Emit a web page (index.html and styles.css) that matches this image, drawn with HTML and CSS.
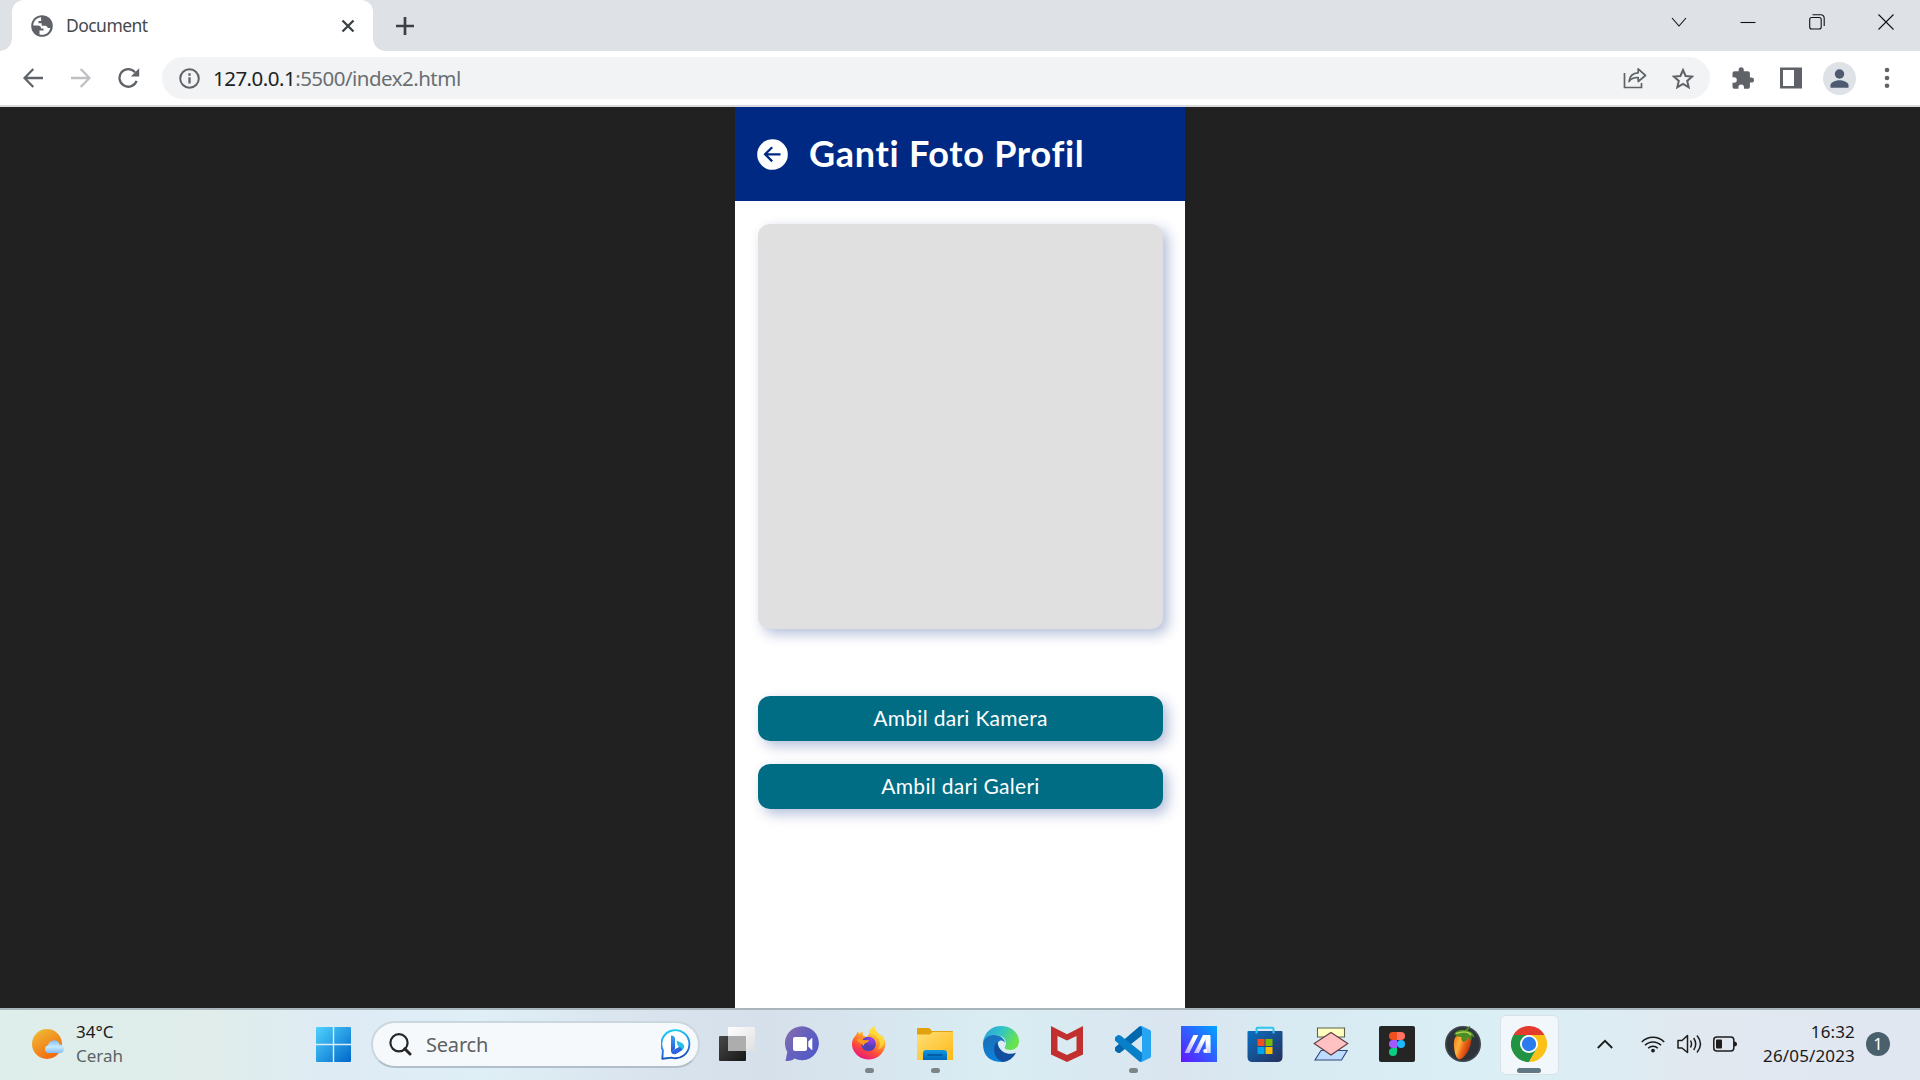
FILE: index.html
```html
<!DOCTYPE html>
<html lang="id">
<head>
<meta charset="utf-8">
<title>Document</title>
<link rel="stylesheet" href="styles.css">
</head>
<body>
<div class="screen">
  <header class="tabstrip">
    <div class="tab">
      <svg class="favicon" width="22" height="22" viewBox="0 0 22 22"><circle cx="11" cy="11" r="10.8" fill="#5f6368"/><path d="M10 2.200C5.500 2.700 2.300 6.400 2.300 10.500h4.200c2.200 0 3.500.8 3.500 3h2.500v2H8.500v3.900c5 1.500 9.800-1.300 10.800-6.400h-1.500c-1.500 0-1.800-2.300-3.300-2.300h-3.800V8.200H7.500V6.100h2.700z" fill="#fff"/></svg>
      <span class="tab-title">Document</span>
      <svg class="tab-close" width="14" height="14" viewBox="0 0 14 14"><path d="M1.500 1.500l11 11M12.500 1.500l-11 11" stroke="#3c4043" stroke-width="2.300"/></svg>
    </div>
    <svg class="new-tab" width="18" height="18" viewBox="0 0 18 18"><path d="M9 0v18M0 9h18" stroke="#3c4043" stroke-width="2.700"/></svg>
    <div class="window-controls">
      <svg width="16" height="16" viewBox="0 0 16 16"><path d="M1 4l7 8 7-8"/></svg>
      <svg width="16" height="16" viewBox="0 0 16 16"><path d="M.5 8.500h15"/></svg>
      <svg width="16" height="16" viewBox="0 0 16 16"><rect x=".7" y="3.500" width="11.500" height="11.500" rx="2"/><path d="M3.500.7h8.300a3.400 3.400 0 0 1 3.400 3.400v8"/></svg>
      <svg width="16" height="16" viewBox="0 0 16 16"><path d="M.5.5l15 15M15.500.5l-15 15"/></svg>
    </div>
  </header>

  <nav class="toolbar">
    <svg width="20" height="20" viewBox="0 0 20 20" fill="none" stroke="#5f6368" stroke-width="2.300"><path d="M20 10H1.800M10.300 1L1.500 10l8.800 9"/></svg>
    <svg width="20" height="20" viewBox="0 0 20 20" fill="none" stroke="#bdbfc2" stroke-width="2.300"><path d="M0 10h18.200M9.700 1l8.800 9-8.800 9"/></svg>
    <svg width="22" height="22" viewBox="0 0 22 22"><path d="M18.600 13.800A8.800 8.800 0 1 1 17 5.200" fill="none" stroke="#5f6368" stroke-width="2.300"/><path d="M21.200 1.200v8.300h-8.300z" fill="#5f6368"/></svg>
    <div class="omnibox">
      <svg width="21" height="21" viewBox="0 0 21 21"><circle cx="10.500" cy="10.500" r="9.300" fill="none" stroke="#5f6368" stroke-width="2"/><path d="M10.500 9.300v6.200M10.500 5.300v2.400" stroke="#5f6368" stroke-width="2.300"/></svg>
      <span class="url"><b>127.0.0.1</b>:5500/index2.html</span>
      <svg class="share" width="24" height="22" viewBox="0 0 24 22" fill="none" stroke="#5f6368" stroke-width="1.700"><path d="M1.500 6v14.500h17V16"/><path d="M6 14.500C6.600 9 10 6 15.200 5.800V1.800l7.300 6.700-7.300 6v-4C11 10.300 8 11.700 6 14.500z" stroke-linejoin="round"/></svg>
      <svg width="22" height="21" viewBox="0 0 22 21"><path d="M11 2l2.600 6 6.600.6-5 4.300 1.500 6.400L11 15.900l-5.700 3.400 1.500-6.400-5-4.300L8.400 8z" fill="none" stroke="#5f6368" stroke-width="2"/></svg>
    </div>
    <div class="tools">
      <svg width="22" height="22" viewBox="1.500 .8 21.500 21.500"><path fill="#5f6368" d="M20.500 11H19V7c0-1.100-.9-2-2-2h-4V3.500a2.500 2.500 0 0 0-5 0V5H4c-1.100 0-2 .9-2 2v3.800h1.500a2.700 2.700 0 0 1 0 5.400H2V20c0 1.100.9 2 2 2h3.800v-1.500a2.700 2.700 0 0 1 5.400 0V22H17c1.100 0 2-.9 2-2v-4h1.500a2.500 2.500 0 0 0 0-5z"/></svg>
      <svg width="22" height="22" viewBox="0 0 22 22"><path fill="#5f6368" fill-rule="evenodd" d="M0 .5h22v21H0zM3 3v16h11V3z"/></svg>
      <svg width="33" height="33" viewBox="0 0 33 33"><circle cx="16.500" cy="16.500" r="16.500" fill="#dee1e6"/><circle cx="16.500" cy="12" r="4.700" fill="#4d5a70"/><path fill="#4d5a70" d="M7.500 25.700v-2.500c0-3.300 6-4.900 9-4.900s9 1.600 9 4.900v2.500z"/></svg>
      <svg width="6" height="22" viewBox="0 0 6 22" fill="#5f6368"><circle cx="3" cy="3" r="2.300"/><circle cx="3" cy="11" r="2.300"/><circle cx="3" cy="18.800" r="2.300"/></svg>
    </div>
  </nav>

  <main class="viewport">
    <section class="phone">
      <div class="phone-header">
        <svg width="31" height="31" viewBox="0 0 31 31"><circle cx="15.500" cy="15.500" r="15.300" fill="#fff"/><path d="M23.500 15.300H8.200M15.200 8.200l-7.100 7.100 7.100 7.100" fill="none" stroke="#002983" stroke-width="2.300"/></svg>
        <h1>Ganti Foto Profil</h1>
      </div>
      <div class="phone-body">
        <div class="photo"></div>
        <button class="action">Ambil dari Kamera</button>
        <button class="action">Ambil dari Galeri</button>
      </div>
    </section>
  </main>

  <footer class="taskbar">
    <div class="weather">
      <svg width="34" height="32" viewBox="0 0 34 32"><defs><linearGradient id="sun" x1="0" y1="0" x2=".6" y2="1"><stop stop-color="#efc237"/><stop offset="1" stop-color="#f26a10"/></linearGradient><linearGradient id="cloud" x1="0" y1="0" x2="0" y2="1"><stop stop-color="#7fc0fa"/><stop offset=".5" stop-color="#c9eaff"/><stop offset="1" stop-color="#84bdf5"/></linearGradient></defs><circle cx="15" cy="16" r="15" fill="url(#sun)"/><path d="M16 25a4 4 0 0 1 0-7.700 6 6 0 0 1 11.600-.8A4.400 4.400 0 0 1 29 25z" fill="url(#cloud)"/></svg>
      <div class="weather-text"><span class="temp">34°C</span><span class="sky">Cerah</span></div>
    </div>
    <svg class="start" width="35" height="35" viewBox="0 0 35 35"><defs><linearGradient id="win" x1="0" y1="0" x2="1" y2="1"><stop stop-color="#4fd3ff"/><stop offset="1" stop-color="#0067c9"/></linearGradient></defs><path fill="url(#win)" d="M1 0h15.800v16.800H0V1a1 1 0 0 1 1-1zM18.200 0H34a1 1 0 0 1 1 1v15.800H18.200zM0 18.200h16.800V35H1a1 1 0 0 1-1-1zM18.200 18.200H35V34a1 1 0 0 1-1 1H18.200z"/></svg>
    <div class="search">
      <svg width="23" height="23" viewBox="0 0 23 23" fill="none" stroke="#262626"><circle cx="10" cy="9.800" r="8.600" stroke-width="2.200"/><path d="M15.800 15.800l5.200 5.200" stroke-width="3" stroke-linecap="round"/></svg>
      <span>Search</span>
      <svg class="bing" width="31" height="31" viewBox="0 0 31 31"><defs><linearGradient id="bing" x1=".3" y1="0" x2=".5" y2="1"><stop stop-color="#1ccdf0"/><stop offset=".6" stop-color="#2885ed"/><stop offset="1" stop-color="#154eb5"/></linearGradient><linearGradient id="bingb" x1="0" y1="0" x2="0" y2="1"><stop stop-color="#37a5f2"/><stop offset="1" stop-color="#2350d8"/></linearGradient></defs><path d="M1.300 29.800l.6-8.300A14 14 0 1 1 10.500 28.600z" fill="#fff" stroke="url(#bing)" stroke-width="1.900" stroke-linejoin="round"/><path d="M10 6.500q4 .3 4 3.500v10l-4 3z" fill="url(#bingb)"/><path d="M15.500 11.500l5 2.300c3.500 1.700 3.400 5.600.3 7.600l-3-3.400-1.500-2.500z" fill="#23c0ea"/><path d="M10 22.700l4-2.500 4-2.200q3 .5 3 3.200L15 25q-4 1-5-2.300z" fill="#2864e5"/></svg>
    </div>
    <div class="apps">
      <div class="app"><svg width="36" height="36" viewBox="0 0 36 36"><defs><linearGradient id="tvd" x1="0" y1="0" x2="1" y2="1"><stop stop-color="#484848"/><stop offset="1" stop-color="#171717"/></linearGradient><linearGradient id="tvl" x1="0" y1="0" x2="1" y2="1"><stop stop-color="#fff"/><stop offset="1" stop-color="#dedfe1"/></linearGradient></defs><rect y="10" width="27" height="25" rx="1" fill="url(#tvd)"/><rect x="9" y="1" width="27" height="24" rx="1" fill="url(#tvl)"/><path d="M9 10h18v15H9z" fill="#adadad"/></svg></div>
      <div class="app"><svg width="36" height="36" viewBox="0 0 36 36"><defs><linearGradient id="chat" x1="0" y1="0" x2="1" y2=".7"><stop stop-color="#8b6eab"/><stop offset=".5" stop-color="#6661bd"/><stop offset="1" stop-color="#5059c9"/></linearGradient></defs><path d="M.5 35l1.800-9A17 17 0 1 1 9.500 32.600C7 34.800 4 35.200.5 35z" fill="url(#chat)"/><rect x="8" y="11" width="14" height="14" rx="2" fill="#fff"/><path d="M23.300 15.500l3.200-3.300q.8-.6.800.4v10.800q0 1-.8.400l-3.200-3.300z" fill="#fff"/></svg></div>
      <div class="app running"><svg width="36" height="36" viewBox="0 0 36 36"><defs><linearGradient id="ff" x1=".8" y1="0" x2=".3" y2="1"><stop offset=".1" stop-color="#fff044"/><stop offset=".4" stop-color="#ffa52b"/><stop offset=".7" stop-color="#ff4b38"/><stop offset="1" stop-color="#e51587"/></linearGradient><radialGradient id="ffp" cx=".7" cy=".2"><stop stop-color="#a23df3"/><stop offset="1" stop-color="#5340b8"/></radialGradient></defs><path d="M5 9q1-3 2.200-3.500.3 1.800 1 2.500Q10 6 12 5.500q-.6 2.500 0 4l4 1.500 2-3Q18 3 23.300 0q.2 4 3.700 6.500l2.500 4.500.5-3C33 12 35 16 34.300 20A17 17 0 0 1 1 20Q.2 14 5 9z" fill="url(#ff)"/><path d="M23 0q-3.500 3-5 7.500 9 .5 11 9 .3 3-2 7 6-2 6.500-10l-1-2.500Q24 8 23 0z" fill="#ffdc3c" opacity=".8"/><circle cx="17.500" cy="18" r="7.300" fill="url(#ffp)"/><path d="M5 14q4-2 7 0l6 .2q0 1.700-3.500 2.800-1.500 1-2 3l-2-2z" fill="#ff9820"/></svg></div>
      <div class="app running"><svg width="36" height="36" viewBox="0 0 36 36"><defs><linearGradient id="fold" x1="0" y1="0" x2="1" y2="1"><stop stop-color="#ffdf78"/><stop offset="1" stop-color="#fdb914"/></linearGradient><linearGradient id="foldb" x1="0" y1="0" x2="0" y2="1"><stop stop-color="#1298e0"/><stop offset="1" stop-color="#0067bd"/></linearGradient></defs><path d="M0 3q0-1 1-1h10q1.500 0 2.500 1.200L15 5h20q1 0 1 1v5H0z" fill="#e2a20b"/><path d="M0 8.500h11.500q2 0 3-1.500l1-1H36v28H0z" fill="url(#fold)"/><path d="M6 34v-7q0-3 3-3h18q3 0 3 3v7z" fill="url(#foldb)"/><path d="M11 29h14" stroke="#05529c" stroke-width="1.500" stroke-linecap="round"/></svg></div>
      <div class="app"><svg width="36" height="36" viewBox="0 0 36 36"><defs><linearGradient id="edg" x1="0" y1="0" x2="1" y2=".4"><stop stop-color="#289ddd"/><stop offset=".5" stop-color="#32c3c9"/><stop offset="1" stop-color="#69e34c"/></linearGradient><linearGradient id="edb" x1="0" y1="0" x2=".4" y2="1"><stop stop-color="#1e6db4"/><stop offset="1" stop-color="#0a82da"/></linearGradient></defs><path d="M0 17C1 6 9 0 18 0c11 0 18 7.500 18 15 0 6-4.300 9-9 9-4 0-6-1.500-5-3.400 2.500-4 0-10-7-11Q5 9 0 17z" fill="url(#edg)"/><path d="M0 18c0-5 5-9 11-9 7 0 11 4.500 11 8-1-2-3-3-5-2.300-5 2-3 10.300 1 14.300 2 3 4 5 2 7Q0 36 0 18z" fill="url(#edb)"/><path d="M14.500 15.500c-6 4.500-4 17 5 20.400 6 0 11-4 13.500-9.100-7.500 3-18-.4-18.500-11.300z" fill="#114e9d"/></svg></div>
      <div class="app"><svg width="36" height="36" viewBox="0 0 36 36"><path fill="#c1302f" fill-rule="evenodd" d="M2 0l16 8.300L34 0v28.500L18 36 2 28.500zM8.500 10v14.500L18 29l9.500-4.500V10L18 14.500z"/></svg></div>
      <div class="app running"><svg width="36" height="36" viewBox="0 0 36 36"><path d="M1 25.500a3 3 0 0 1 0-5L24 .8q2-1.400 3.500 0V9L5.500 26.500q-2 1.500-4.500-1z" fill="#0068ae"/><path d="M1 10.500a3 3 0 0 0 0 5l23 19.700q2 1.400 3.500 0V27L5.500 9.500Q3 8 1 10.500z" fill="#087fc9"/><path d="M25 .3Q26 0 27.500.5l7.500 3.600q1 .6 1 1.700v24.400q0 1.200-1 1.700l-7.500 3.600q-1.500.6-2.500.2 2-.7 2-2.700V3q0-2-2-2.700z" fill="#27a5f3"/></svg></div>
      <div class="app"><svg width="36" height="36" viewBox="0 0 36 36"><defs><linearGradient id="asus" x1="0" y1="1" x2="1" y2="0"><stop stop-color="#6414ff"/><stop offset="1" stop-color="#00a6ff"/></linearGradient><linearGradient id="asw" x1="0" y1="1" x2=".4" y2="0"><stop stop-color="#b6a9ff"/><stop offset=".8" stop-color="#fff"/></linearGradient></defs><path d="M0 0h36v36H0z" fill="url(#asus)"/><path d="M3.500 27l9-18h4.800l-9 18zM13 27l9-18h4.800l-9 18zM24.500 14l2.300-5H29v18h-4z" fill="url(#asw)"/><circle cx="24.200" cy="25" r="2" fill="#fff"/><path d="M29.500 9.500V27" stroke="#bce5ff" stroke-width=".7"/></svg></div>
      <div class="app"><svg width="36" height="36" viewBox="0 0 36 36"><defs><linearGradient id="store" x1="0" y1="0" x2="1" y2="1"><stop stop-color="#0a6fc2"/><stop offset="1" stop-color="#252f5b"/></linearGradient></defs><path d="M.5 6q0-1 1-1h33q1 0 1 1v25q0 5-5 5h-25q-5 0-5-5z" fill="url(#store)"/><path d="M9.500 7.500V2.800q0-1 1-1h15q1 0 1 1v4.700" fill="none" stroke="#2dc4f1" stroke-width="2"/><path d="M10.500 13h7v7h-7z" fill="#f25022"/><path d="M18.500 13h7v7h-7z" fill="#7fba00"/><path d="M10.500 21h7v7h-7z" fill="#00a4ef"/><path d="M18.500 21h7v7h-7z" fill="#ffb900"/></svg></div>
      <div class="app"><svg width="36" height="36" viewBox="0 0 36 36" stroke-width="1.100"><path d="M4.500 2h27v9h-27z" fill="#ffffc0" stroke="#5d6249"/><path d="M8 24.500h26.200L28.500 34H2z" fill="#bcdcff" stroke="#304779"/><path d="M18 6.500l16.800 11L18 29 1.200 17.500z" fill="#ffc1c1" stroke="#613a3e"/></svg></div>
      <div class="app"><svg width="36" height="36" viewBox="0 0 36 36"><rect width="36" height="36" rx="2" fill="#252525"/><path d="M14 6h4v8h-4a4 4 0 0 1 0-8z" fill="#f24e1e"/><path d="M18 6h4a4 4 0 0 1 0 8h-4z" fill="#ff7262"/><path d="M14 14h4v8h-4a4 4 0 0 1 0-8z" fill="#a259ff"/><circle cx="22" cy="18" r="4" fill="#1abcfe"/><path d="M14 22h4v4a4 4 0 1 1-4-4z" fill="#0acf83"/></svg></div>
      <div class="app"><svg width="36" height="36" viewBox="0 0 36 36"><defs><linearGradient id="fl" x1="0" y1=".1" x2="1" y2=".6"><stop stop-color="#f27a1a"/><stop offset=".35" stop-color="#ffb23c"/><stop offset=".6" stop-color="#f2641a"/><stop offset="1" stop-color="#a92c03"/></linearGradient></defs><circle cx="18" cy="18" r="18" fill="#3e464c"/><circle cx="18" cy="18" r="16.300" fill="#2d3338"/><path d="M10.500 11c5-3 16-1 15.500 5-.3 6-6 16-11 17.300-3.500.6-5.500-6.300-6-12.300-.3-4 0-8 1.500-10z" fill="url(#fl)"/><path d="M9 8q4-5 11-4l4.500-4 .8.600L22.500 5q6 0 7 7l-3-2 0 5-4-4q0 4-4 5-3-2-2-5-5 0-7.500-3z" fill="#4c8c22"/><path d="M11 7.500q5-2 9-1.500 4 0 6 3" fill="none" stroke="#a4d152" stroke-width="1.500"/></svg></div>
      <div class="app active"><svg width="36" height="36" viewBox="0 0 36 36"><path d="M2.400 9A18 18 0 0 1 33.600 9H18z" fill="#e33b2e"/><path d="M2.400 9A18 18 0 0 0 18 36l7.800-13.500L18 9z" fill="#229342"/><path d="M33.600 9A18 18 0 0 1 18 36l7.800-13.500L18 9z" fill="#fbc116"/><circle cx="18" cy="18" r="9" fill="#fff"/><circle cx="18" cy="18" r="7.200" fill="#2b7bee"/></svg></div>
    </div>
    <div class="tray">
      <svg width="16" height="10" viewBox="0 0 16 10"><path d="M.8 9L8 1.800 15.200 9" fill="none" stroke="#1c1c1c" stroke-width="1.800"/></svg>
      <svg class="wifi" width="24" height="18" viewBox="0 0 24 18" fill="none" stroke="#1c1c1c" stroke-width="1.600"><path d="M.8 7a15.500 15.500 0 0 1 22.400 0M4 10.300a11.200 11.200 0 0 1 16 0M7.200 13.200a6.800 6.800 0 0 1 9.600 0"/><circle cx="12" cy="15.600" r="1.900" fill="#1c1c1c" stroke="none"/></svg>
      <svg class="volume" width="25" height="20" viewBox="0 0 25 20" fill="none" stroke="#1c1c1c" stroke-width="1.500"><path d="M1 6.500h4L10.500 1.500v17L5 14H1zM13.500 6.500q2 3.500 0 7M16.700 4q4 6 0 12M20 1.500q7 8.500 0 17" stroke-linejoin="round"/></svg>
      <svg class="battery" width="24" height="16" viewBox="0 0 24 16"><rect x=".8" y="1" width="20" height="14" rx="3" fill="none" stroke="#1c1c1c" stroke-width="1.500"/><rect x="3" y="3.600" width="6" height="9" rx="1" fill="#1c1c1c"/><path d="M21 5.500q3 0 3 2.500t-3 2.500z" fill="#1c1c1c"/></svg>
      <div class="clock"><span class="time">16:32</span><span class="date">26/05/2023</span></div>
      <span class="count">1</span>
    </div>
  </footer>
</div>
</body>
</html>
```
FILE: styles.css
```css
* { box-sizing: border-box; }
body { margin: 0; font-family: "Noto Sans", "Open Sans", sans-serif; overflow: hidden; }
svg { display: block; flex: none; }
span { white-space: nowrap; }
.screen { width: 1920px; height: 1080px; display: flex; flex-direction: column; }

.tabstrip { height: 51px; background: #dee1e6; display: flex; align-items: center; flex: none; }
.tabstrip::before { content: ""; width: 12px; height: 51px; background: radial-gradient(circle at 0 0, transparent 11.500px, #fff 12px) no-repeat 0 39px / 12px 12px; }
.tab { position: relative; width: 361px; height: 51px; background: #fff; border-radius: 12px 12px 0 0; display: flex; align-items: center; padding: 0 18px 0 19px; }
.tab::after { content: ""; position: absolute; left: 361px; bottom: 0; width: 12px; height: 12px; background: radial-gradient(circle at 12px 0, transparent 11.500px, #fff 12px); }
.tab-title { margin-left: 13px; padding-bottom: 1px; font-size: 17.500px; letter-spacing: -.55px; color: #45494d; }
.tab-close { margin-left: auto; }
.new-tab { margin-left: 23px; }
.window-controls { margin-left: auto; display: flex; gap: 53px; padding: 0 26px 8px 0; fill: none; stroke: #111; stroke-width: 1.100; }

.toolbar { height: 56px; background: #fff; border-bottom: 2px solid #d9dadc; display: flex; align-items: center; padding-left: 23px; flex: none; }
.toolbar > svg + svg { margin-left: 28px; }
.toolbar > svg:nth-child(3) { margin-left: 27px; }
.omnibox { margin-left: 22px; width: 1548px; height: 42px; border-radius: 21px; background: #f1f3f4; display: flex; align-items: center; padding: 0 16px 0 17px; }
.url { margin-left: 13px; font-size: 20.500px; letter-spacing: -.52px; color: #6a6e72; }
.url b { font-weight: 400; color: #202124; }
.share { margin-left: auto; margin-right: 25px; }
.tools { margin-left: 22px; display: flex; align-items: center; }
.tools svg:nth-child(2) { margin-left: 26px; }
.tools svg:nth-child(3) { margin-left: 21px; }
.tools svg:nth-child(4) { margin-left: 28px; }

.viewport { flex: 1; background: #212121; display: flex; justify-content: center; }
.phone { width: 450px; background: #fff; font-family: Lato, "Open Sans", sans-serif; font-variant-ligatures: none; }
.phone-header { height: 94px; background: #002983; display: flex; align-items: center; padding-left: 22px; }
h1 { margin: 0 0 0 21px; padding-bottom: 2px; font-size: 36px; line-height: 44px; letter-spacing: .7px; font-weight: 700; color: #fff; white-space: nowrap; }
.phone-body { padding: 23px 22px 0 23px; display: flex; flex-direction: column; }
.photo { height: 405px; margin-bottom: 67px; border-radius: 12px; background: #e0e0e0; box-shadow: 5px 5px 13px rgba(0, 41, 131, .3); }
.action { height: 45px; margin-bottom: 23px; border: 0; border-radius: 12px; padding: 0; background: #006d84; color: #fff; font: 21px/43px Lato, "Open Sans", sans-serif; letter-spacing: .3px; box-shadow: 5px 5px 13px rgba(0, 41, 131, .3); display: flex; justify-content: center; align-items: flex-start; }

.taskbar { height: 72px; flex: none; border-top: 2px solid #a8b6bb; padding-bottom: 2px; display: flex; align-items: center; background: linear-gradient(90deg, #deeeea 0, #e0edeb 11%, #deebf5 18%, #dfeff6 25%, #d9e3ed 34%, #d6e0eb 40%, #d9edf3 52%, #dae5ef 61%, #d8eaf2 67%, #daeff5 77%, #dcedf3 83%, #e1e8f0 88%, #e1e7f0 100%); }
.weather { width: 316px; padding-left: 32px; display: flex; align-items: center; }
.weather-text { margin-left: 10px; display: flex; flex-direction: column; font-size: 17px; line-height: 24px; }
.temp { color: #1a1a1a; }
.sky { color: #5b6364; }
.search { width: 329px; height: 47px; margin-left: 20px; border: 2px solid #cbd7df; border-bottom-color: #b2bfca; border-radius: 24px; background: #f5f9fc; display: flex; align-items: center; padding: 0 6px 0 16px; font-size: 20px; letter-spacing: -.2px; color: #5e6062; }
.search span { margin-left: 14px; }
.bing { margin-left: auto; }
.apps { margin-left: 4px; display: flex; }
.app { position: relative; width: 66px; height: 68px; display: flex; align-items: center; justify-content: center; }
.app svg { position: relative; }
.running::after, .active::after { content: ""; position: absolute; bottom: 5px; left: 29px; width: 9px; height: 5px; border-radius: 3px; background: #7c8487; }
.active::after { left: 21px; width: 24px; background: #607786; }
.active::before { content: ""; position: absolute; left: 4px; top: 5px; width: 57px; height: 58px; border: 1px solid #d7e2e8; border-radius: 6px; background: #f1f7fa; }
.tray { margin-left: 35px; display: flex; align-items: center; color: #1a1a1a; }
.wifi { margin-left: 28px; }
.volume { margin-left: 12px; }
.battery { margin-left: 11px; }
.clock { width: 104px; margin-left: 14px; display: flex; flex-direction: column; align-items: flex-end; font-size: 17px; line-height: 24px; letter-spacing: .15px; }
.count { margin-left: 11px; width: 24px; height: 24px; border-radius: 50%; background: #4b606d; color: #fff; font-size: 16.500px; line-height: 23px; text-align: center; }
```
